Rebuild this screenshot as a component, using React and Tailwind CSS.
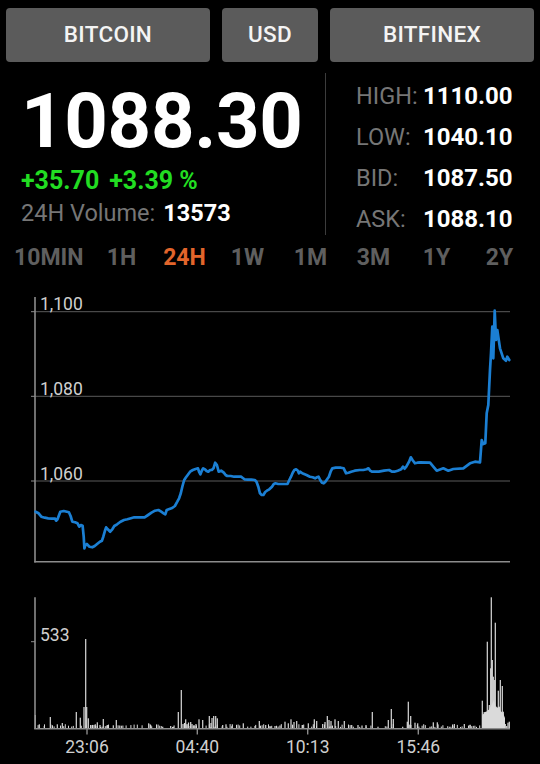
import React from "react";

const Z = [[103,695],[112,700],[120,710],[130,713],[140,715],[150,716],[160,716],[163,722],[167,718],[175,695],[185,693],[200,697],[205,708],[210,725],[218,727],[225,730],[230,740],[235,735],[240,737],[243,770],[245,805],[248,795],[252,792],[260,800],[268,802],[275,798],[282,792],[290,785],[296,782],[300,770],[305,752],[308,742],[313,748],[320,755],[326,748],[332,738],[340,733],[350,725],[360,720],[370,718],[380,715],[390,712],[405,712],[420,712],[430,705],[440,698],[450,692],[460,690],[468,695],[475,700],[480,703],[484,690],[490,688],[500,684],[508,678],[515,665],[520,655],[525,640],[530,618],[535,600],[540,592],[545,585],[552,575],[560,570],[568,567],[575,565],[578,575],[582,583],[586,572],[590,565],[595,568],[600,573],[605,575],[610,570],[615,570],[620,565],[625,548],[630,555],[635,575],[642,572],[650,578],[655,585],[660,588],[670,588],[680,590],[690,590],[700,590],[705,594],[710,598],[720,599],[730,599],[740,600],[745,605],[750,620],[755,640],[760,645],[765,645],[770,636],[775,632],[782,628],[790,620],[795,612],[800,610],[808,612],[820,612],[835,612],[840,600],[845,590],[850,578],[855,570],[860,568],[865,572],[868,580],[872,575],[878,580],[890,585],[900,590],[908,592],[915,595],[920,592],[925,590],[930,600],[935,608],[940,610],[945,605],[950,598],[955,590],[960,575],[965,565],[975,563],[990,563],[998,565],[1005,580],[1012,578],[1020,575],[1030,572],[1045,570],[1055,570],[1065,568],[1070,565],[1075,572],[1080,575],[1090,575],[1100,575],[1115,572],[1130,570],[1138,575],[1145,575],[1155,572],[1165,568],[1170,560],[1175,566],[1180,560],[1188,545],[1193,532],[1198,540],[1205,550],[1212,548],[1220,547]];

const TAIL = [[430,462.7],[433.3,466.7],[436.7,470.7],[443.3,468.3],[448.3,470.7],[453.3,469],[463.3,468.3],[470,463.3],[475,461.7],[480,462.3],[481.7,440],[483.3,444],[485.3,443.3],[486.7,413.3],[488.3,405],[490,370],[491,353.3],[492.3,326.7],[493.3,358.3],[494.7,310.7],[496,340],[497.3,330],[500,348.3],[503.3,358.3],[506,360.7],[507.3,356.7],[509.3,360]];

const PTS = Z.map(([x, y]) => [x / 2.904, 280 + y / 3]).concat(TAIL);
const LINE = PTS.map(([x, y]) => `${x.toFixed(1)},${y.toFixed(1)}`).join(" ");

const VB = [[35.3,715],[39.3,724.3],[44.3,726],[50.3,717],[57.3,724.3],[62.3,723],[76.3,712],[80.3,717.7],[84,707],[85.7,639],[86.7,707],[88.3,718.3],[90.7,725],[92.7,725],[95.3,724.3],[97.3,722.3],[100,725],[103.3,719],[107.3,725],[113.3,725.3],[116.3,720],[121.3,725.7],[148.7,723.3],[150.7,725],[162.7,726.7],[170.7,726],[173.3,726.7],[178.3,712],[181.3,690],[183,724],[184.5,723],[185.7,719.3],[187,724],[188.5,722.5],[190.7,722],[192,724],[194,725],[196,724],[199,719.3],[202.7,720],[209.3,716],[211,723],[212,718],[213.7,716],[215.7,716],[217.3,718.3],[222.7,725],[226,724.3],[232.3,724.3],[243.3,723.3],[255,726],[259.3,721],[265.7,725],[270,726],[275,726],[280,725.5],[285,721.7],[288.3,723.3],[291,719.3],[294,722],[296.7,721],[302.7,725],[308.3,723.3],[314.3,719.3],[316.7,721],[322.7,724],[325,722],[327.3,716],[329,720],[331,721],[335,719.3],[338.3,721],[344.3,721],[351.7,725],[358,725],[362,725.5],[366,725],[372.3,712],[378,726.7],[388.3,720],[391.3,709],[393.3,719],[402.7,726.7],[407.3,721.7],[408.3,701.7],[410.7,716],[415,722.7],[417.7,723.3],[430,726.7],[433.3,722.3],[437.3,722.3],[454.3,724],[464.3,724],[470,725],[482.3,700.7],[483.3,714.3],[484.2,712],[485,716],[486,713],[487.3,641.7],[488.3,710],[489.3,705],[490.7,668.3],[491.3,597.3],[492.3,660],[493.3,676.7],[494.3,680],[495.3,622.7],[496.3,706.7],[497.3,711.7],[498.3,690.7],[499.3,706.7],[500.3,680],[501.3,711.7],[502.3,686],[503.3,711.7],[504.3,720],[505.3,724],[506.7,726],[508,722.7],[509.3,721.7]];

function noiseBars() {
  let s = 12345;
  const rnd = () => {
    s = (s * 1103515245 + 12345) % 2147483648;
    return s / 2147483648;
  };
  const out = [];
  for (let x = 36; x < 480; x += 1.6) {
    if (rnd() < 0.45) out.push([x, 728 - (1 + rnd() * 3)]);
  }
  return out;
}
const NOISE = noiseBars();

const BTN = "h-[54px] rounded-[4px] bg-[#5b5b5b] flex items-center justify-center text-[22.5px] font-medium text-[#f4f4f4] tracking-[0.3px]";

function Stat({ label, value }) {
  return (
    <div className="flex leading-[41px] text-[24px] whitespace-nowrap">
      <span className="w-[67px] text-[#767676] text-[23.5px]">{label}</span>
      <span className="font-bold text-white">{value}</span>
    </div>
  );
}

export default function App() {
  const ranges = ["1H", "24H", "1W", "1M", "3M", "1Y", "2Y"];
  return (
    <div className="w-[540px] h-[764px] bg-black overflow-hidden [font-family:Roboto,'Noto_Sans',sans-serif] text-white">
      <div className="flex gap-[12px] px-[6px] pt-[8px]">
        <div className={`${BTN} w-[204px]`}>BITCOIN</div>
        <div className={`${BTN} w-[96px]`}>USD</div>
        <div className={`${BTN} w-[204px]`}>BITFINEX</div>
      </div>

      <div className="flex h-[180px]">
        <div className="w-[325px] pl-[21px] flex flex-col">
          <div className="mt-[21px] text-[76px] leading-[76px] font-bold tracking-[-0.3px]">1088.30</div>
          <div className="mt-[9px] text-[25px] leading-[25px] font-bold text-[#22dd22] flex gap-[10px] whitespace-nowrap">
            <span>+35.70</span>
            <span>+3.39 %</span>
          </div>
          <div className="mt-[8px] text-[23.5px] leading-[24px] whitespace-nowrap flex">
            <span className="text-[#767676]">24H Volume:</span>
            <span className="font-bold text-white ml-[8px]">13573</span>
          </div>
        </div>
        <div className="mt-[11px] h-[162px] border-l border-[#3c3c3c] pl-[30px] pt-[3px] flex flex-col">
          <Stat label="HIGH:" value="1110.00" />
          <Stat label="LOW:" value="1040.10" />
          <Stat label="BID:" value="1087.50" />
          <Stat label="ASK:" value="1088.10" />
        </div>
      </div>

      <div className="flex items-center h-[33px] text-[23px] font-bold text-[#5f5f5f]">
        <div className="w-[90px] pl-[14px]">10MIN</div>
        {ranges.map((r) => (
          <div key={r} className={`w-[63px] text-center ${r === "24H" ? "text-[#e2652b]" : ""}`}>{r}</div>
        ))}
      </div>

      <svg className="block" width="540" height="300" viewBox="0 275 540 300">
        {[311.7, 396.3, 481].map((y) => (
          <g key={y}>
            <line x1="35" x2="510" y1={y} y2={y} stroke="#5a5a5a" strokeWidth="1" />
            <line x1="31" x2="35" y1={y} y2={y} stroke="#8c8c8c" strokeWidth="1" />
          </g>
        ))}
        <line x1="35" x2="35" y1="297" y2="562.5" stroke="#8c8c8c" strokeWidth="1.6" />
        <line x1="34.2" x2="510" y1="561.7" y2="561.7" stroke="#8c8c8c" strokeWidth="1.6" />
        <g fill="#cfcfcf" fontSize="17.5" fontFamily="Roboto, sans-serif">
          <text x="40" y="310.3">1,100</text>
          <text x="40" y="395">1,080</text>
          <text x="40" y="479.7">1,060</text>
        </g>
        <polyline points={LINE} fill="none" stroke="#1b7fd3" strokeWidth="2.7" strokeLinejoin="round" strokeLinecap="round" />
      </svg>

      <svg className="block" width="540" height="189" viewBox="0 575 540 189">
        <g fill="#dadada">
          {NOISE.map(([x, t], i) => (
            <rect key={"n" + i} x={x} y={t} width="1" height={728.5 - t} />
          ))}
          {VB.map(([x, t], i) => (
            <rect key={"b" + i} x={x - 0.6} y={t} width="1.2" height={728.5 - t} />
          ))}
          <polygon points="482,728.5 482,716 485,712 488,711 491,706 494,700 496,708 499,707 501,712 503,713 505,718 505,728.5" />
        </g>
        <line x1="35" x2="35" y1="597.3" y2="729" stroke="#8c8c8c" strokeWidth="1.6" />
        <line x1="31" x2="35" y1="641.7" y2="641.7" stroke="#8c8c8c" strokeWidth="1" />
        <line x1="34.2" x2="510" y1="728.8" y2="728.8" stroke="#8c8c8c" strokeWidth="1.4" />
        {[87, 197.3, 307.7, 418.3].map((x) => (
          <line key={x} x1={x} x2={x} y1="729" y2="734.5" stroke="#8c8c8c" strokeWidth="1.4" />
        ))}
        <g fill="#cfcfcf" fontSize="17.5" fontFamily="Roboto, sans-serif">
          <text x="40" y="640.5">533</text>
          <text x="87" y="753.3" textAnchor="middle">23:06</text>
          <text x="197.3" y="753.3" textAnchor="middle">04:40</text>
          <text x="307.7" y="753.3" textAnchor="middle">10:13</text>
          <text x="418.3" y="753.3" textAnchor="middle">15:46</text>
        </g>
      </svg>
    </div>
  );
}
